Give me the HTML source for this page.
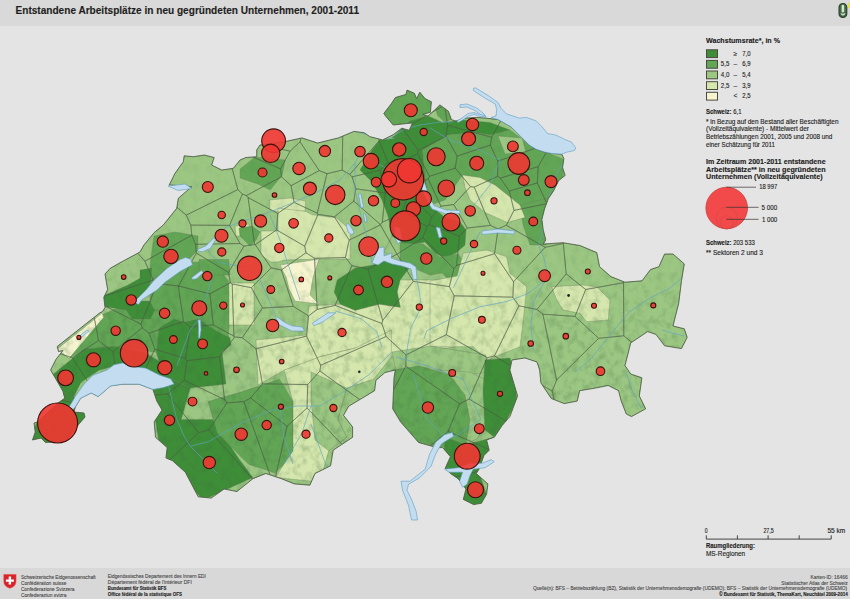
<!DOCTYPE html>
<html><head><meta charset="utf-8">
<style>
html,body{margin:0;padding:0;}
body{width:850px;height:599px;overflow:hidden;background:#e4e4e4;position:relative;font-family:"Liberation Sans",sans-serif;color:#222;}
.hdr{position:absolute;left:0;top:0;width:850px;height:26px;background:#d9d9d9;}
.title{position:absolute;left:15px;top:4px;font-weight:bold;font-size:10.1px;color:#222;white-space:nowrap;}
.ftr{position:absolute;left:0;top:568px;width:850px;height:31px;background:#d8d8d8;}
.t{position:absolute;white-space:nowrap;line-height:1;}
svg{position:absolute;left:0;top:0;}
</style></head><body>
<div class="hdr"></div>
<div class="ftr"></div>
<svg width="850" height="599" viewBox="0 0 850 599">
<defs><clipPath id="ch"><polygon points="184.2,155.8 193.3,156.7 204.2,155.0 214.2,157.5 211.7,165.0 221.7,170.0 233.3,168.3 240.0,160.0 245.8,157.5 256.7,156.7 256.7,150.0 260.0,145.0 284.0,141.8 302.0,137.9 317.6,143.0 338.3,137.9 353.9,131.4 364.2,132.7 370.0,136.7 382.7,139.9 393.3,134.6 401.8,128.2 409.2,130.3 412.5,122.9 393.3,125.0 385.9,116.5 383.8,113.4 391.2,103.9 395.4,97.5 406.0,94.4 407.0,90.1 414.4,93.3 416.6,98.6 419.8,92.2 425.0,98.6 431.4,101.8 430.4,112.3 422.9,114.4 428.0,116.0 435.6,109.1 439.9,104.9 448.4,111.2 451.5,119.7 456.0,121.0 465.6,118.1 477.0,117.4 485.4,118.1 498.1,119.5 510.8,126.6 520.7,136.5 529.2,144.9 536.2,149.2 544.7,152.0 551.8,153.4 561.7,154.1 563.9,158.6 562.6,167.6 565.2,175.4 558.7,180.6 553.5,190.9 548.3,198.7 544.5,209.0 541.9,219.4 543.2,229.7 545.8,240.0 543.2,244.1 562.9,242.7 579.9,245.5 596.8,252.6 599.6,266.7 610.9,276.6 625.0,282.2 642.0,280.8 650.5,269.5 658.9,266.7 664.6,254.0 673.0,254.0 684.3,263.9 681.5,280.8 678.7,303.4 673.0,326.0 684.3,328.8 687.2,337.3 681.5,348.6 664.6,345.8 656.1,334.5 647.6,331.6 639.2,337.3 630.7,342.9 627.9,354.2 625.0,365.5 630.7,374.0 641.9,377.8 639.3,395.9 645.7,408.8 631.5,416.6 626.3,414.0 621.2,401.1 618.6,390.7 608.2,385.5 595.3,388.1 579.7,390.7 577.2,401.1 564.2,403.6 551.3,398.5 540.9,382.9 539.6,370.0 537.0,362.0 525.0,358.0 512.0,360.0 509.9,370.0 517.6,395.9 509.9,416.6 502.1,425.6 494.3,437.3 486.6,439.9 489.2,450.2 484.0,455.4 478.8,469.6 476.2,473.5 487.9,483.9 486.6,494.2 481.4,503.3 473.6,504.6 463.3,499.4 465.9,489.0 458.1,478.7 450.4,473.5 445.2,468.3 450.4,456.7 442.6,447.6 436.7,447.6 418.6,442.5 400.5,421.8 392.7,408.8 394.0,377.8 395.3,370.0 384.9,372.6 375.9,380.4 374.6,390.7 361.6,398.5 348.7,406.2 343.5,415.3 352.6,426.9 352.6,437.3 333.2,450.2 330.6,465.8 315.0,473.5 309.9,485.2 294.3,483.9 281.4,478.7 265.9,473.5 252.9,478.7 240.0,489.0 237.0,491.6 224.1,489.0 211.2,498.1 198.2,496.8 185.3,472.2 172.3,460.6 165.9,458.0 167.2,447.6 155.5,437.3 154.2,421.8 162.0,410.1 156.8,401.1 152.9,389.4 138.8,384.1 122.9,384.1 110.6,385.9 98.2,396.5 91.2,392.9 80.6,398.2 75.3,407.1 74.0,412.0 84.0,413.0 85.0,417.0 79.0,424.0 66.2,441.2 45.5,442.5 41.0,438.0 32.5,440.0 35.2,432.1 34.0,423.0 37.8,421.8 58.0,403.0 64.7,398.2 62.9,391.2 50.6,370.0 55.9,359.4 62.9,350.6 58.5,351.6 57.2,346.5 99.9,312.8 102.5,311.5 105.0,307.6 103.8,297.3 107.6,289.5 105.0,274.0 110.2,268.3 123.2,261.0 140.0,252.0 143.9,245.0 154.2,232.6 163.3,225.0 176.7,208.3 178.3,198.3 191.7,186.7 169.2,185.0 175.0,173.3 183.3,161.7"/></clipPath>
<filter id="hs" x="0" y="0" width="850" height="599" filterUnits="userSpaceOnUse"><feTurbulence type="fractalNoise" baseFrequency="0.14 0.11" numOctaves="3" seed="7"/><feColorMatrix type="matrix" values="0 0 0 0 0.05  0 0 0 0 0.15  0 0 0 0 0.05  0.7 0 0 0 -0.3"/></filter>
<linearGradient id="alg" x1="0" y1="0" x2="0" y2="1"><stop offset="0" stop-color="#fff" stop-opacity="0.25"/><stop offset="0.38" stop-color="#fff" stop-opacity="0.35"/><stop offset="0.55" stop-color="#fff" stop-opacity="0.9"/><stop offset="1" stop-color="#fff" stop-opacity="1"/></linearGradient>
<mask id="alp" maskUnits="userSpaceOnUse" x="0" y="0" width="850" height="599"><rect x="0" y="80" width="850" height="440" fill="url(#alg)"/></mask></defs>
<polygon points="184.2,155.8 193.3,156.7 204.2,155.0 214.2,157.5 211.7,165.0 221.7,170.0 233.3,168.3 240.0,160.0 245.8,157.5 256.7,156.7 256.7,150.0 260.0,145.0 284.0,141.8 302.0,137.9 317.6,143.0 338.3,137.9 353.9,131.4 364.2,132.7 370.0,136.7 382.7,139.9 393.3,134.6 401.8,128.2 409.2,130.3 412.5,122.9 393.3,125.0 385.9,116.5 383.8,113.4 391.2,103.9 395.4,97.5 406.0,94.4 407.0,90.1 414.4,93.3 416.6,98.6 419.8,92.2 425.0,98.6 431.4,101.8 430.4,112.3 422.9,114.4 428.0,116.0 435.6,109.1 439.9,104.9 448.4,111.2 451.5,119.7 456.0,121.0 465.6,118.1 477.0,117.4 485.4,118.1 498.1,119.5 510.8,126.6 520.7,136.5 529.2,144.9 536.2,149.2 544.7,152.0 551.8,153.4 561.7,154.1 563.9,158.6 562.6,167.6 565.2,175.4 558.7,180.6 553.5,190.9 548.3,198.7 544.5,209.0 541.9,219.4 543.2,229.7 545.8,240.0 543.2,244.1 562.9,242.7 579.9,245.5 596.8,252.6 599.6,266.7 610.9,276.6 625.0,282.2 642.0,280.8 650.5,269.5 658.9,266.7 664.6,254.0 673.0,254.0 684.3,263.9 681.5,280.8 678.7,303.4 673.0,326.0 684.3,328.8 687.2,337.3 681.5,348.6 664.6,345.8 656.1,334.5 647.6,331.6 639.2,337.3 630.7,342.9 627.9,354.2 625.0,365.5 630.7,374.0 641.9,377.8 639.3,395.9 645.7,408.8 631.5,416.6 626.3,414.0 621.2,401.1 618.6,390.7 608.2,385.5 595.3,388.1 579.7,390.7 577.2,401.1 564.2,403.6 551.3,398.5 540.9,382.9 539.6,370.0 537.0,362.0 525.0,358.0 512.0,360.0 509.9,370.0 517.6,395.9 509.9,416.6 502.1,425.6 494.3,437.3 486.6,439.9 489.2,450.2 484.0,455.4 478.8,469.6 476.2,473.5 487.9,483.9 486.6,494.2 481.4,503.3 473.6,504.6 463.3,499.4 465.9,489.0 458.1,478.7 450.4,473.5 445.2,468.3 450.4,456.7 442.6,447.6 436.7,447.6 418.6,442.5 400.5,421.8 392.7,408.8 394.0,377.8 395.3,370.0 384.9,372.6 375.9,380.4 374.6,390.7 361.6,398.5 348.7,406.2 343.5,415.3 352.6,426.9 352.6,437.3 333.2,450.2 330.6,465.8 315.0,473.5 309.9,485.2 294.3,483.9 281.4,478.7 265.9,473.5 252.9,478.7 240.0,489.0 237.0,491.6 224.1,489.0 211.2,498.1 198.2,496.8 185.3,472.2 172.3,460.6 165.9,458.0 167.2,447.6 155.5,437.3 154.2,421.8 162.0,410.1 156.8,401.1 152.9,389.4 138.8,384.1 122.9,384.1 110.6,385.9 98.2,396.5 91.2,392.9 80.6,398.2 75.3,407.1 74.0,412.0 84.0,413.0 85.0,417.0 79.0,424.0 66.2,441.2 45.5,442.5 41.0,438.0 32.5,440.0 35.2,432.1 34.0,423.0 37.8,421.8 58.0,403.0 64.7,398.2 62.9,391.2 50.6,370.0 55.9,359.4 62.9,350.6 58.5,351.6 57.2,346.5 99.9,312.8 102.5,311.5 105.0,307.6 103.8,297.3 107.6,289.5 105.0,274.0 110.2,268.3 123.2,261.0 140.0,252.0 143.9,245.0 154.2,232.6 163.3,225.0 176.7,208.3 178.3,198.3 191.7,186.7 169.2,185.0 175.0,173.3 183.3,161.7" fill="#9cc783" stroke="none"/>
<g clip-path="url(#ch)">
<polygon points="154.0,236.0 175.0,232.0 198.0,236.0 198.0,250.0 190.0,258.0 182.0,262.0 165.0,272.0 150.0,282.0 150.0,265.0" fill="#62a655" stroke="#6b7a5e" stroke-width="0.5" stroke-opacity="0.7"/>
<polygon points="140.0,270.0 152.0,268.0 150.0,290.0 140.0,290.0" fill="#3e8e38" stroke="#6b7a5e" stroke-width="0.5" stroke-opacity="0.7"/>
<polygon points="99.1,316.1 120.1,307.1 156.2,310.1 168.2,310.1 177.2,319.1 159.2,328.1 156.2,352.2 114.1,346.2 84.1,349.2 69.0,358.2 57.0,349.2" fill="#62a655" stroke="#6b7a5e" stroke-width="0.5" stroke-opacity="0.7"/>
<polygon points="100.0,300.0 105.1,295.1 129.1,284.6 147.2,274.1 150.2,289.1 138.1,301.1 150.2,301.1 154.7,310.1 150.2,319.1 132.1,319.1 126.1,310.1 106.6,307.1" fill="#3e8e38" stroke="#6b7a5e" stroke-width="0.5" stroke-opacity="0.7"/>
<polygon points="57.0,349.2 102.1,313.1 103.6,317.6 69.1,358.2" fill="#f6f5cf" stroke="#6b7a5e" stroke-width="0.5" stroke-opacity="0.7"/>
<polygon points="51.0,376.2 69.0,361.2 84.1,349.2 114.1,346.2 144.1,352.2 159.2,361.2 174.2,373.2 171.2,382.2 147.2,373.2 120.1,364.2 99.1,370.2 81.1,382.2 72.0,400.0 48.0,394.2" fill="#3e8e38" stroke="#6b7a5e" stroke-width="0.5" stroke-opacity="0.7"/>
<polygon points="28.0,447.0 92.0,447.0 92.0,405.0 62.0,392.0 45.0,398.0" fill="#3e8e38" stroke="#6b7a5e" stroke-width="0.5" stroke-opacity="0.7"/>
<polygon points="159.2,328.1 174.2,319.1 183.2,322.1 198.2,319.1 218.0,323.0 222.0,330.0 230.0,338.0 231.0,345.0 222.0,352.0 226.0,384.0 190.2,388.1 172.4,379.2 159.2,361.2 156.2,352.2" fill="#3e8e38" stroke="#6b7a5e" stroke-width="0.5" stroke-opacity="0.7"/>
<polygon points="150.0,282.0 165.0,270.0 190.0,262.0 212.0,262.0 228.0,280.0 232.0,300.0 228.0,337.0 216.2,331.1 198.2,319.1 183.2,322.1 174.2,319.1 168.2,310.1 154.7,310.1 150.2,301.1" fill="#62a655" stroke="#6b7a5e" stroke-width="0.5" stroke-opacity="0.7"/>
<polygon points="240.1,169.0 255.1,157.0 285.2,160.0 282.2,175.1 270.2,190.1 258.1,184.1 240.1,178.1" fill="#62a655" stroke="#6b7a5e" stroke-width="0.5" stroke-opacity="0.7"/>
<polygon points="269.5,200.0 290.0,198.0 305.7,201.0 305.0,211.0 280.0,212.0 270.0,210.0" fill="#d6e7ae" stroke="#6b7a5e" stroke-width="0.5" stroke-opacity="0.7"/>
<polygon points="235.0,226.0 249.0,224.0 249.0,236.0 236.0,236.0" fill="#d6e7ae" stroke="#6b7a5e" stroke-width="0.5" stroke-opacity="0.7"/>
<polygon points="239.0,228.0 252.0,226.0 260.0,232.0 256.0,240.0 250.0,246.0 244.0,240.0 240.0,236.0" fill="#62a655" stroke="#6b7a5e" stroke-width="0.5" stroke-opacity="0.7"/>
<polygon points="199.0,259.5 228.7,259.5 230.0,275.0 199.0,275.0" fill="#62a655" stroke="#6b7a5e" stroke-width="0.5" stroke-opacity="0.7"/>
<polygon points="278.0,208.0 305.7,211.4 312.3,214.7 337.0,218.0 350.2,230.0 350.2,259.1 322.0,259.0 284.0,260.0 278.0,262.0 271.0,262.0 261.0,255.0 261.0,231.0 278.0,231.0" fill="#d6e7ae" stroke="#6b7a5e" stroke-width="0.5" stroke-opacity="0.7"/>
<polygon points="229.0,283.0 254.0,283.0 254.0,325.0 229.0,325.0" fill="#d6e7ae" stroke="#6b7a5e" stroke-width="0.5" stroke-opacity="0.7"/>
<polygon points="309.0,306.0 340.2,304.1 355.2,310.2 379.2,304.1 400.2,307.2 394.0,280.0 460.0,280.0 460.0,346.0 391.4,356.8 355.6,347.9 319.9,356.8 309.0,362.0 284.1,370.2 258.0,385.0 256.0,340.0 306.0,335.0" fill="#d6e7ae" stroke="#6b7a5e" stroke-width="0.5" stroke-opacity="0.7"/>
<polygon points="280.1,265.1 319.1,259.1 313.1,277.1 310.1,295.1 319.1,304.1 295.1,301.1 289.1,289.1 286.1,277.1" fill="#f6f5cf" stroke="#6b7a5e" stroke-width="0.5" stroke-opacity="0.7"/>
<polygon points="337.2,280.1 355.2,268.1 373.2,265.1 382.2,259.1 400.2,263.6 409.2,268.1 400.2,280.1 397.2,292.1 400.2,307.2 379.2,304.1 355.2,310.2 340.2,304.1 334.1,292.1" fill="#3e8e38" stroke="#6b7a5e" stroke-width="0.5" stroke-opacity="0.7"/>
<polygon points="383.0,113.0 391.0,103.0 395.0,97.0 407.0,90.0 420.0,92.0 432.0,101.0 431.0,113.0 414.0,121.0 393.0,126.0 385.0,117.0" fill="#62a655" stroke="#6b7a5e" stroke-width="0.5" stroke-opacity="0.7"/>
<polygon points="435.6,109.1 439.9,104.9 448.4,111.2 451.5,119.7 444.1,121.8 437.8,115.5" fill="#62a655" stroke="#6b7a5e" stroke-width="0.5" stroke-opacity="0.7"/>
<polygon points="410.0,121.0 428.0,116.0 442.5,122.5 462.5,120.0 490.0,122.5 510.0,130.0 490.0,135.0 475.0,132.5 447.5,135.0 412.5,140.0 392.5,137.5" fill="#3e8e38" stroke="#6b7a5e" stroke-width="0.5" stroke-opacity="0.7"/>
<polygon points="380.0,140.0 405.0,137.5 422.5,150.0 425.0,175.0 430.0,205.0 445.0,217.5 460.0,222.0 466.0,230.0 465.0,245.0 456.0,253.0 445.0,258.0 435.0,253.0 425.0,242.0 406.0,246.0 396.0,244.0 392.0,236.0 388.0,216.0 382.0,200.0 372.0,182.0 360.0,170.0 372.0,150.0" fill="#3e8e38" stroke="#6b7a5e" stroke-width="0.5" stroke-opacity="0.7"/>
<polygon points="392.0,236.0 406.0,246.0 424.0,248.0 420.0,260.0 400.0,260.0 384.0,252.0" fill="#9cc783" stroke="#6b7a5e" stroke-width="0.5" stroke-opacity="0.7"/>
<polygon points="400.0,243.0 423.0,244.0 440.0,257.0 458.0,254.0 467.0,267.0 465.0,273.0 450.0,281.0 442.0,273.0 430.0,275.0 418.0,270.0 410.0,265.0 400.0,260.0" fill="#62a655" stroke="#6b7a5e" stroke-width="0.5" stroke-opacity="0.7"/>
<polygon points="392.0,137.0 447.5,135.0 440.0,142.0 422.5,150.0 405.0,145.0" fill="#3e8e38" stroke="#6b7a5e" stroke-width="0.5" stroke-opacity="0.7"/>
<polygon points="422.5,150.0 447.5,135.0 475.0,132.5 490.0,135.0 510.0,130.0 530.0,145.0 565.0,160.0 560.0,205.0 545.0,230.0 525.0,217.5 520.0,205.0 495.0,185.0 462.5,175.0 445.0,200.0 430.0,205.0 425.0,175.0" fill="#62a655" stroke="#6b7a5e" stroke-width="0.5" stroke-opacity="0.7"/>
<polygon points="498.0,136.0 522.0,138.0 526.0,152.0 505.0,154.0" fill="#9cc783" stroke="#6b7a5e" stroke-width="0.5" stroke-opacity="0.7"/>
<polygon points="520.0,205.0 548.0,198.0 544.0,220.0 546.0,245.0 530.0,245.0 523.0,225.0" fill="#62a655" stroke="#6b7a5e" stroke-width="0.5" stroke-opacity="0.7"/>
<polygon points="462.5,175.0 480.0,177.5 495.0,185.0 520.0,205.0 525.0,217.5 507.5,222.5 485.0,212.5 470.0,200.0 465.0,187.5" fill="#d6e7ae" stroke="#6b7a5e" stroke-width="0.5" stroke-opacity="0.7"/>
<polygon points="430.0,281.0 457.0,276.0 463.3,253.3 486.7,250.0 506.7,256.7 510.0,273.3 526.7,286.7 523.3,320.0 520.0,346.7 486.7,360.0 473.3,346.7 430.0,346.7" fill="#d6e7ae" stroke="#6b7a5e" stroke-width="0.5" stroke-opacity="0.7"/>
<polygon points="551.7,286.7 583.3,285.0 596.7,286.7 610.0,300.0 608.3,320.0 586.7,321.7 580.0,313.3 563.3,310.0 556.7,300.0" fill="#d6e7ae" stroke="#6b7a5e" stroke-width="0.5" stroke-opacity="0.7"/>
<polygon points="150.0,388.1 172.4,379.2 190.2,388.1 181.3,419.4 212.6,419.4 239.4,459.6 252.8,477.5 203.6,499.9 172.4,468.6 158.9,441.8" fill="#3e8e38" stroke="#6b7a5e" stroke-width="0.5" stroke-opacity="0.7"/>
<polygon points="208.1,401.5 239.4,392.6 279.6,379.2 293.0,401.5 293.0,455.2 275.2,473.1 248.3,464.1 217.1,432.8" fill="#62a655" stroke="#6b7a5e" stroke-width="0.5" stroke-opacity="0.7"/>
<polygon points="284.1,370.2 319.9,356.8 355.6,347.9 391.4,330.0 391.4,356.8 373.5,379.2 346.7,388.1 337.8,419.4 346.7,437.3 328.8,450.7 319.9,482.0 275.2,477.5 293.0,450.7 293.0,401.5" fill="#d6e7ae" stroke="#6b7a5e" stroke-width="0.5" stroke-opacity="0.7"/>
<polygon points="311.0,372.0 346.7,388.1 337.8,419.4 346.7,437.3 328.8,450.7 315.0,440.0 311.0,400.0" fill="#9cc783" stroke="#6b7a5e" stroke-width="0.5" stroke-opacity="0.7"/>
<polygon points="392.0,352.0 430.0,346.0 486.0,355.0 486.0,372.0 470.0,375.0 440.0,370.0 410.0,370.0 396.0,372.0" fill="#9cc783" stroke="#6b7a5e" stroke-width="0.5" stroke-opacity="0.7"/>
<polygon points="392.0,370.0 420.0,366.0 450.0,375.0 465.0,395.0 470.0,420.0 466.0,445.0 440.0,447.0 418.6,442.5 400.5,421.8 392.7,408.8" fill="#62a655" stroke="#6b7a5e" stroke-width="0.5" stroke-opacity="0.7"/>
<polygon points="440.0,370.0 470.0,372.0 486.0,380.0 486.0,420.0 478.0,438.0 466.0,445.0 470.0,420.0 465.0,395.0 450.0,375.0" fill="#9cc783" stroke="#6b7a5e" stroke-width="0.5" stroke-opacity="0.7"/>
<polygon points="485.0,360.0 510.0,358.0 515.0,376.7 516.7,400.0 506.7,420.0 494.0,437.0 485.0,430.0 483.0,390.0" fill="#3e8e38" stroke="#6b7a5e" stroke-width="0.5" stroke-opacity="0.7"/>
<polygon points="445.0,437.0 466.0,445.0 494.0,437.0 490.0,460.0 480.0,475.0 490.0,505.0 440.0,505.0" fill="#3e8e38" stroke="#6b7a5e" stroke-width="0.5" stroke-opacity="0.7"/>
<rect x="0" y="0" width="850" height="599" fill="#000" filter="url(#hs)" mask="url(#alp)"/>
<path d="M61.6 400.4 L58.0 403.0 L37.8 421.8 L34.0 423.0 L35.2 432.1 L32.5 440.0 L41.0 438.0 L45.5 442.5 L66.2 441.2 L79.0 424.0 L85.0 417.0 L84.0 413.0 L74.0 412.0 L75.3 407.1 L77.6 403.3 L61.6 400.4Z M113.0 351.7 L98.5 340.6 L72.3 357.7 L97.1 396.0 L98.2 396.5 L110.6 385.9 L118.4 384.8 L113.0 351.7Z M118.4 384.8 L122.9 384.1 L138.3 384.1 L154.8 349.2 L149.1 333.1 L142.2 327.8 L113.0 351.7 L118.4 384.8Z M77.6 403.3 L80.6 398.2 L91.2 392.9 L97.1 396.0 L72.3 357.7 L60.4 353.8 L55.9 359.4 L50.6 370.0 L62.9 391.2 L64.7 398.2 L61.6 400.4 L77.6 403.3Z M72.3 357.7 L98.5 340.6 L94.2 317.3 L57.2 346.5 L58.5 351.6 L62.9 350.6 L60.4 353.8 L72.3 357.7Z M153.2 280.0 L144.9 261.2 L137.7 253.2 L123.2 261.0 L110.2 268.3 L105.0 274.0 L107.6 289.5 L104.4 296.1 L153.2 280.0Z M198.6 432.7 L167.3 393.9 L154.8 395.1 L156.8 401.1 L162.0 410.1 L154.2 421.8 L155.5 437.3 L167.2 447.6 L165.9 458.0 L170.0 459.6 L198.6 432.7Z M142.2 327.8 L140.9 324.1 L104.8 305.9 L105.0 307.6 L102.5 311.5 L99.9 312.8 L94.2 317.3 L98.5 340.6 L113.0 351.7 L142.2 327.8Z M186.3 215.1 L237.8 189.6 L232.2 168.5 L221.7 170.0 L211.7 165.0 L214.2 157.5 L204.2 155.0 L193.3 156.7 L184.2 155.8 L183.3 161.7 L175.0 173.3 L169.2 185.0 L191.7 186.7 L178.3 198.3 L176.9 207.3 L186.3 215.1Z M157.1 283.6 L153.2 280.0 L104.4 296.1 L103.8 297.3 L104.8 305.9 L140.9 324.1 L157.1 283.6Z M140.9 324.1 L142.2 327.8 L149.1 333.1 L183.5 321.5 L178.3 286.0 L157.1 283.6 L140.9 324.1Z M149.1 333.1 L154.8 349.2 L185.5 358.6 L190.2 327.0 L183.5 321.5 L149.1 333.1Z M191.8 235.2 L144.9 261.2 L153.2 280.0 L157.1 283.6 L178.3 286.0 L178.5 286.0 L196.3 253.1 L195.5 244.3 L191.8 235.2Z M195.5 244.3 L240.1 243.5 L229.6 225.4 L190.8 225.1 L191.8 235.2 L195.5 244.3Z M144.9 261.2 L191.8 235.2 L190.8 225.1 L186.3 215.1 L176.9 207.3 L176.7 208.3 L163.3 225.0 L154.2 232.6 L143.9 245.0 L140.0 252.0 L137.7 253.2 L144.9 261.2Z M138.3 384.1 L138.8 384.1 L152.9 389.4 L154.8 395.1 L167.3 393.9 L184.1 380.2 L186.8 360.7 L185.5 358.6 L154.8 349.2 L138.3 384.1Z M208.8 429.9 L198.6 432.7 L170.0 459.6 L172.3 460.6 L185.3 472.2 L198.2 496.8 L211.2 498.1 L224.1 489.0 L237.0 491.6 L240.0 489.0 L252.5 479.0 L208.8 429.9Z M186.8 360.7 L219.5 356.9 L234.7 337.0 L233.9 336.1 L213.3 324.9 L190.2 327.0 L185.5 358.6 L186.8 360.7Z M190.2 327.0 L213.3 324.9 L209.9 293.8 L178.5 286.0 L178.3 286.0 L183.5 321.5 L190.2 327.0Z M167.3 393.9 L198.6 432.7 L208.8 429.9 L226.9 402.9 L224.6 399.6 L184.1 380.2 L167.3 393.9Z M196.3 253.1 L178.5 286.0 L209.9 293.8 L230.4 282.7 L228.5 272.4 L196.3 253.1Z M228.5 272.4 L243.9 246.2 L240.1 243.5 L195.5 244.3 L196.3 253.1 L228.5 272.4Z M213.3 324.9 L233.9 336.1 L232.2 284.0 L230.4 282.7 L209.9 293.8 L213.3 324.9Z M184.1 380.2 L224.6 399.6 L219.5 356.9 L186.8 360.7 L184.1 380.2Z M280.6 168.9 L290.0 151.2 L262.1 144.7 L260.0 145.0 L256.7 150.0 L256.7 156.7 L252.8 157.0 L280.6 168.9Z M226.9 402.9 L243.9 401.6 L250.6 398.0 L262.4 383.8 L256.0 348.8 L242.3 337.7 L234.7 337.0 L219.5 356.9 L224.6 399.6 L226.9 402.9Z M226.9 402.9 L208.8 429.9 L252.5 479.0 L252.9 478.7 L265.9 473.5 L270.1 474.9 L243.9 401.6 L226.9 402.9Z M243.9 246.2 L254.6 244.5 L248.1 197.6 L246.3 195.6 L242.4 194.0 L229.6 225.4 L240.1 243.5 L243.9 246.2Z M190.8 225.1 L229.6 225.4 L242.4 194.0 L237.8 189.6 L186.3 215.1 L190.8 225.1Z M242.4 194.0 L246.3 195.6 L281.5 176.8 L280.6 168.9 L252.8 157.0 L245.8 157.5 L240.0 160.0 L233.3 168.3 L232.2 168.5 L237.8 189.6 L242.4 194.0Z M230.4 282.7 L232.2 284.0 L251.4 287.7 L271.2 267.9 L255.2 244.7 L254.6 244.5 L243.9 246.2 L228.5 272.4 L230.4 282.7Z M242.3 337.7 L262.5 308.0 L251.4 287.7 L232.2 284.0 L233.9 336.1 L234.7 337.0 L242.3 337.7Z M307.1 408.0 L287.1 426.2 L275.5 476.7 L281.4 478.7 L294.3 483.9 L309.9 485.2 L315.0 473.5 L330.6 465.8 L333.2 450.2 L342.0 444.4 L307.1 408.0Z M251.4 287.7 L262.5 308.0 L293.3 306.4 L281.3 270.0 L271.2 267.9 L251.4 287.7Z M242.3 337.7 L256.0 348.8 L306.6 336.1 L308.6 315.9 L293.3 306.4 L262.5 308.0 L242.3 337.7Z M243.9 401.6 L270.1 474.9 L275.5 476.7 L287.1 426.2 L250.6 398.0 L243.9 401.6Z M246.3 195.6 L248.1 197.6 L277.7 213.4 L294.1 202.4 L291.1 185.7 L281.5 176.8 L246.3 195.6Z M255.2 244.7 L276.6 229.9 L277.7 213.4 L248.1 197.6 L254.6 244.5 L255.2 244.7Z M271.2 267.9 L281.3 270.0 L306.0 252.7 L304.7 246.2 L276.6 229.9 L255.2 244.7 L271.2 267.9Z M290.0 151.2 L300.1 141.9 L300.8 138.2 L284.0 141.8 L262.1 144.7 L290.0 151.2Z M281.5 176.8 L291.1 185.7 L319.2 170.6 L300.1 141.9 L290.0 151.2 L280.6 168.9 L281.5 176.8Z M262.4 383.8 L307.7 384.6 L319.9 371.0 L320.7 365.3 L306.6 336.1 L256.0 348.8 L262.4 383.8Z M250.6 398.0 L287.1 426.2 L307.1 408.0 L307.7 384.6 L262.4 383.8 L250.6 398.0Z M403.3 129.4 L404.1 128.9 L401.8 128.2 L401.1 128.7 L403.3 129.4Z M426.6 115.6 L422.9 114.4 L430.4 112.3 L431.4 101.8 L425.0 98.6 L419.8 92.2 L416.6 98.6 L414.4 93.3 L407.0 90.1 L406.0 94.4 L395.4 97.5 L391.2 103.9 L383.8 113.4 L385.9 116.5 L393.3 125.0 L412.5 122.9 L411.9 124.3 L426.6 115.6Z M442.0 106.5 L439.9 104.9 L435.6 109.1 L432.0 112.4 L442.0 106.5Z M277.7 213.4 L276.6 229.9 L304.7 246.2 L318.0 214.3 L317.3 213.2 L294.1 202.4 L277.7 213.4Z M308.6 315.9 L317.2 309.4 L314.5 258.3 L306.0 252.7 L281.3 270.0 L293.3 306.4 L308.6 315.9Z M306.6 336.1 L320.7 365.3 L386.1 336.5 L381.9 323.5 L335.1 305.4 L317.2 309.4 L308.6 315.9 L306.6 336.1Z M306.0 252.7 L314.5 258.3 L345.4 257.5 L349.2 240.0 L334.4 216.8 L318.0 214.3 L304.7 246.2 L306.0 252.7Z M300.1 141.9 L319.2 170.6 L327.0 173.7 L342.2 170.1 L342.7 136.1 L338.3 137.9 L317.6 143.0 L302.0 137.9 L300.8 138.2 L300.1 141.9Z M294.1 202.4 L317.3 213.2 L327.0 173.7 L319.2 170.6 L291.1 185.7 L294.1 202.4Z M307.1 408.0 L342.0 444.4 L352.6 437.3 L352.6 426.9 L343.5 415.3 L348.7 406.2 L359.8 399.6 L319.9 371.0 L307.7 384.6 L307.1 408.0Z M477.6 471.5 L478.8 469.6 L484.0 455.4 L489.2 450.2 L489.0 449.4 L448.1 431.4 L430.3 445.8 L436.7 447.6 L442.6 447.6 L450.4 456.7 L445.2 468.3 L450.4 473.5 L455.5 476.9 L477.6 471.5Z M318.0 214.3 L334.4 216.8 L353.8 201.1 L355.8 188.8 L352.1 176.9 L349.8 174.4 L342.2 170.1 L327.0 173.7 L317.3 213.2 L318.0 214.3Z M349.2 240.0 L380.4 224.9 L380.4 224.5 L353.8 201.1 L334.4 216.8 L349.2 240.0Z M317.2 309.4 L335.1 305.4 L351.9 265.6 L345.4 257.5 L314.5 258.3 L317.2 309.4Z M448.1 431.4 L459.5 403.8 L405.8 366.2 L393.5 389.9 L392.7 408.8 L400.5 421.8 L418.6 442.5 L430.3 445.8 L448.1 431.4Z M405.8 366.2 L406.0 354.9 L386.1 336.5 L320.7 365.3 L319.9 371.0 L359.8 399.6 L361.6 398.5 L374.6 390.7 L375.9 380.4 L384.9 372.6 L395.3 370.0 L394.0 377.8 L393.5 389.9 L405.8 366.2Z M349.8 174.4 L379.1 140.8 L379.0 139.0 L370.0 136.7 L364.2 132.7 L353.9 131.4 L342.7 136.1 L342.2 170.1 L349.8 174.4Z M381.9 323.5 L382.7 320.5 L368.0 269.3 L351.9 265.6 L335.1 305.4 L381.9 323.5Z M351.9 265.6 L368.0 269.3 L397.0 254.2 L380.4 224.9 L349.2 240.0 L345.4 257.5 L351.9 265.6Z M381.9 323.5 L386.1 336.5 L406.0 354.9 L446.3 334.7 L454.2 295.8 L449.3 286.6 L413.3 281.4 L382.7 320.5 L381.9 323.5Z M352.1 176.9 L380.1 170.1 L388.0 162.3 L379.1 140.8 L349.8 174.4 L352.1 176.9Z M382.3 222.2 L401.8 213.8 L408.2 194.1 L395.9 190.1 L385.3 193.0 L382.3 222.2Z M385.3 193.0 L385.1 192.9 L355.8 188.8 L353.8 201.1 L380.4 224.5 L382.3 222.2 L385.3 193.0Z M382.7 320.5 L413.3 281.4 L397.2 254.2 L397.0 254.2 L368.0 269.3 L382.7 320.5Z M379.1 140.8 L388.0 162.3 L394.9 164.7 L417.6 153.7 L418.3 150.3 L403.3 129.4 L401.1 128.7 L393.3 134.6 L382.7 139.9 L379.0 139.0 L379.1 140.8Z M380.4 224.9 L397.0 254.2 L397.2 254.2 L422.8 237.6 L427.2 226.3 L401.8 213.8 L382.3 222.2 L380.4 224.5 L380.4 224.9Z M355.8 188.8 L385.1 192.9 L380.1 170.1 L352.1 176.9 L355.8 188.8Z M380.1 170.1 L385.1 192.9 L385.3 193.0 L395.9 190.1 L395.9 167.2 L394.9 164.7 L388.0 162.3 L380.1 170.1Z M413.3 281.4 L449.3 286.6 L453.9 268.7 L422.8 237.6 L397.2 254.2 L413.3 281.4Z M395.9 190.1 L408.2 194.1 L408.7 194.0 L418.1 183.9 L395.9 167.2 L395.9 190.1Z M418.3 150.3 L446.0 136.3 L447.6 125.3 L445.1 108.7 L442.0 106.5 L432.0 112.4 L428.0 116.0 L426.6 115.6 L411.9 124.3 L409.2 130.3 L404.1 128.9 L403.3 129.4 L418.3 150.3Z M408.2 194.1 L401.8 213.8 L427.2 226.3 L429.1 224.6 L431.7 217.0 L408.7 194.0 L408.2 194.1Z M395.9 167.2 L418.1 183.9 L428.2 178.8 L429.4 176.3 L417.6 153.7 L394.9 164.7 L395.9 167.2Z M417.6 153.7 L429.4 176.3 L455.2 168.1 L457.1 156.1 L446.0 136.3 L418.3 150.3 L417.6 153.7Z M418.1 183.9 L408.7 194.0 L431.7 217.0 L440.9 206.2 L428.2 178.8 L418.1 183.9Z M456.6 265.4 L459.5 236.2 L429.1 224.6 L427.2 226.3 L422.8 237.6 L453.9 268.7 L456.6 265.4Z M453.9 268.7 L449.3 286.6 L454.2 295.8 L512.9 297.2 L513.5 281.8 L494.5 253.7 L456.6 265.4 L453.9 268.7Z M447.6 125.3 L491.7 137.3 L500.6 120.9 L498.1 119.5 L485.4 118.1 L477.0 117.4 L465.6 118.1 L456.0 121.0 L451.5 119.7 L448.4 111.2 L445.1 108.7 L447.6 125.3Z M428.2 178.8 L440.9 206.2 L453.7 204.5 L470.5 186.6 L455.2 168.1 L429.4 176.3 L428.2 178.8Z M455.5 476.9 L458.1 478.7 L465.9 489.0 L463.3 499.4 L473.6 504.6 L481.4 503.3 L486.6 494.2 L487.9 483.9 L476.2 473.5 L477.6 471.5 L455.5 476.9Z M405.8 366.2 L459.5 403.8 L469.2 399.1 L487.3 357.7 L446.3 334.7 L406.0 354.9 L405.8 366.2Z M446.0 136.3 L457.1 156.1 L490.3 145.1 L491.7 137.3 L447.6 125.3 L446.0 136.3Z M429.1 224.6 L459.5 236.2 L467.3 228.0 L453.7 204.5 L440.9 206.2 L431.7 217.0 L429.1 224.6Z M453.7 204.5 L467.3 228.0 L490.4 225.4 L474.2 187.1 L470.5 186.6 L453.7 204.5Z M456.6 265.4 L494.5 253.7 L498.1 229.0 L490.4 225.4 L467.3 228.0 L459.5 236.2 L456.6 265.4Z M448.1 431.4 L489.0 449.4 L486.6 439.9 L494.3 437.3 L502.1 425.6 L506.1 421.0 L469.2 399.1 L459.5 403.8 L448.1 431.4Z M457.1 156.1 L455.2 168.1 L470.5 186.6 L474.2 187.1 L497.7 176.3 L497.8 161.2 L490.3 145.1 L457.1 156.1Z M446.3 334.7 L487.3 357.7 L494.5 355.9 L518.9 305.8 L512.9 297.2 L454.2 295.8 L446.3 334.7Z M552.2 391.1 L542.4 385.2 L551.3 398.5 L554.1 399.6 L552.2 391.1Z M494.5 355.9 L487.3 357.7 L469.2 399.1 L506.1 421.0 L509.9 416.6 L517.6 395.9 L509.9 370.0 L510.8 365.9 L494.5 355.9Z M623.8 335.8 L598.7 338.3 L556.6 380.0 L552.2 391.1 L554.1 399.6 L564.2 403.6 L577.2 401.1 L579.7 390.7 L595.3 388.1 L608.2 385.5 L618.6 390.7 L621.2 401.1 L626.3 414.0 L631.5 416.6 L645.7 408.8 L639.3 395.9 L641.9 377.8 L630.7 374.0 L625.0 365.5 L627.9 354.2 L630.7 342.9 L631.8 342.2 L623.8 335.8Z M491.7 137.3 L490.3 145.1 L497.8 161.2 L534.9 148.4 L529.2 144.9 L520.7 136.5 L510.8 126.6 L500.6 120.9 L491.7 137.3Z M490.4 225.4 L498.1 229.0 L506.3 225.2 L514.0 210.4 L509.3 191.0 L500.3 178.1 L497.7 176.3 L474.2 187.1 L490.4 225.4Z M518.9 305.8 L536.9 309.5 L566.2 273.9 L563.3 243.5 L545.1 247.3 L513.5 281.8 L512.9 297.2 L518.9 305.8Z M498.1 229.0 L494.5 253.7 L513.5 281.8 L545.1 247.3 L506.3 225.2 L498.1 229.0Z M556.6 380.0 L542.9 314.2 L536.9 309.5 L518.9 305.8 L494.5 355.9 L510.8 365.9 L512.0 360.0 L525.0 358.0 L537.0 362.0 L539.6 370.0 L540.9 382.9 L542.4 385.2 L552.2 391.1 L556.6 380.0Z M497.7 176.3 L500.3 178.1 L538.2 166.6 L546.3 152.3 L544.7 152.0 L536.2 149.2 L534.9 148.4 L497.8 161.2 L497.7 176.3Z M538.2 166.6 L537.3 183.0 L546.7 203.1 L548.3 198.7 L553.5 190.9 L558.7 180.6 L565.2 175.4 L562.6 167.6 L563.9 158.6 L561.7 154.1 L551.8 153.4 L546.3 152.3 L538.2 166.6Z M509.3 191.0 L537.3 183.0 L538.2 166.6 L500.3 178.1 L509.3 191.0Z M514.0 210.4 L546.4 203.8 L546.7 203.1 L537.3 183.0 L509.3 191.0 L514.0 210.4Z M506.3 225.2 L545.1 247.3 L563.3 243.5 L563.9 242.9 L562.9 242.7 L543.2 244.1 L545.8 240.0 L543.2 229.7 L541.9 219.4 L544.5 209.0 L546.4 203.8 L514.0 210.4 L506.3 225.2Z M542.9 314.2 L575.0 316.4 L585.7 289.5 L566.2 273.9 L536.9 309.5 L542.9 314.2Z M566.2 273.9 L585.7 289.5 L623.5 282.7 L624.0 281.8 L610.9 276.6 L599.6 266.7 L596.8 252.6 L579.9 245.5 L563.9 242.9 L563.3 243.5 L566.2 273.9Z M598.7 338.3 L575.0 316.4 L542.9 314.2 L556.6 380.0 L598.7 338.3Z M575.0 316.4 L598.7 338.3 L623.8 335.8 L623.5 282.7 L585.7 289.5 L575.0 316.4Z M623.5 282.7 L623.8 335.8 L631.8 342.2 L639.2 337.3 L647.6 331.6 L656.1 334.5 L664.6 345.8 L681.5 348.6 L687.2 337.3 L684.3 328.8 L673.0 326.0 L678.7 303.4 L681.5 280.8 L684.3 263.9 L673.0 254.0 L664.6 254.0 L658.9 266.7 L650.5 269.5 L642.0 280.8 L625.0 282.2 L624.0 281.8 L623.5 282.7Z" fill="none" stroke="#4f5f48" stroke-width="0.6" stroke-opacity="0.75"/>
<polyline points="167.9,383.6 172.0,400.0 176.8,419.4 184.0,436.0 190.2,446.2 208.1,441.8 239.4,423.9 270.7,410.5 297.5,406.0 319.9,406.0 342.2,392.6 369.0,374.7 391.4,352.4" fill="none" stroke="#5fa3c6" stroke-width="0.8" stroke-opacity="0.8"/>
<polyline points="311.0,406.0 302.0,432.8 284.0,464.0" fill="none" stroke="#5fa3c6" stroke-width="0.8" stroke-opacity="0.8"/>
<polyline points="311.0,424.0 328.8,473.0" fill="none" stroke="#5fa3c6" stroke-width="0.8" stroke-opacity="0.8"/>
<polyline points="279.6,406.0 284.0,437.0 293.0,464.0" fill="none" stroke="#5fa3c6" stroke-width="0.8" stroke-opacity="0.8"/>
<polyline points="190.2,446.2 217.0,473.0" fill="none" stroke="#5fa3c6" stroke-width="0.8" stroke-opacity="0.8"/>
<polyline points="395.9,356.8 427.0,365.8 463.0,379.2 480.8,419.4 454.0,437.3" fill="none" stroke="#5fa3c6" stroke-width="0.8" stroke-opacity="0.8"/>
<polyline points="413.7,374.7 427.0,419.4 445.0,437.3" fill="none" stroke="#5fa3c6" stroke-width="0.8" stroke-opacity="0.8"/>
<polyline points="335.4,311.0 361.3,318.8 376.8,331.8 382.0,347.3" fill="none" stroke="#5fa3c6" stroke-width="0.8" stroke-opacity="0.8"/>
<polyline points="275.3,314.7 268.9,299.9 260.5,280.8 249.9,268.1 239.3,266.0 226.6,263.9 218.1,261.8 211.8,255.4 205.4,247.0" fill="none" stroke="#5fa3c6" stroke-width="0.8" stroke-opacity="0.8"/>
<polyline points="214.0,238.0 225.0,228.0 240.0,222.0 262.0,215.0 290.0,204.0 315.0,193.0 340.0,180.0 355.0,163.0 362.0,150.0" fill="none" stroke="#5fa3c6" stroke-width="0.8" stroke-opacity="0.8"/>
<polyline points="260.0,145.0 284.0,141.0 302.0,137.0 318.0,142.0 338.0,137.0 354.0,131.0 375.0,137.0 389.0,139.0 405.0,129.0 420.0,125.0 440.0,122.0 452.0,122.0" fill="none" stroke="#5fa3c6" stroke-width="0.8" stroke-opacity="0.8"/>
<polyline points="424.0,338.9 426.7,330.8 453.4,317.5 480.1,306.8 506.8,301.5 528.2,293.5 545.5,280.0 548.0,274.8 544.0,258.7 538.8,245.4 545.0,220.0 548.0,200.0 556.0,175.0 565.0,160.0 570.0,150.0" fill="none" stroke="#5fa3c6" stroke-width="0.8" stroke-opacity="0.8"/>
<polyline points="545.5,280.0 533.5,301.5 530.8,325.5 533.5,349.5" fill="none" stroke="#5fa3c6" stroke-width="0.8" stroke-opacity="0.8"/>
<polyline points="480.0,232.0 469.4,253.4 453.4,288.0" fill="none" stroke="#5fa3c6" stroke-width="0.8" stroke-opacity="0.8"/>
<polyline points="413.4,264.0 418.7,288.0 421.4,306.8 410.7,328.2 405.3,360.0" fill="none" stroke="#5fa3c6" stroke-width="0.8" stroke-opacity="0.8"/>
<polyline points="372.0,263.0 368.0,240.0 362.0,220.0 355.0,190.0 355.0,163.0" fill="none" stroke="#5fa3c6" stroke-width="0.8" stroke-opacity="0.8"/>
<polyline points="422.0,183.0 400.0,175.0 380.0,165.0 360.0,156.0" fill="none" stroke="#5fa3c6" stroke-width="0.8" stroke-opacity="0.8"/>
<polyline points="575.0,372.0 590.0,360.0 610.0,335.0 629.0,312.0 650.0,298.0 670.0,288.0 684.0,276.0" fill="none" stroke="#5fa3c6" stroke-width="0.8" stroke-opacity="0.8"/>
<polyline points="626.0,372.0 632.0,390.0 641.0,408.0" fill="none" stroke="#5fa3c6" stroke-width="0.8" stroke-opacity="0.8"/>
<polyline points="662.0,330.0 672.0,333.0 684.0,336.0" fill="none" stroke="#5fa3c6" stroke-width="0.8" stroke-opacity="0.8"/>
<polyline points="470.0,210.0 490.0,185.0 500.0,160.0 480.0,150.0 450.0,140.0 430.0,128.0" fill="none" stroke="#5fa3c6" stroke-width="0.8" stroke-opacity="0.8"/>
<polyline points="190.0,330.0 176.8,365.8" fill="none" stroke="#5fa3c6" stroke-width="0.8" stroke-opacity="0.8"/>
<polyline points="211.8,278.7 205.0,300.0 198.0,320.0 190.0,330.0" fill="none" stroke="#5fa3c6" stroke-width="0.8" stroke-opacity="0.8"/>
<polyline points="300.0,300.0 290.0,270.0 280.0,240.0 270.0,215.0" fill="none" stroke="#5fa3c6" stroke-width="0.8" stroke-opacity="0.8"/>
</g>
<polygon points="184.2,155.8 193.3,156.7 204.2,155.0 214.2,157.5 211.7,165.0 221.7,170.0 233.3,168.3 240.0,160.0 245.8,157.5 256.7,156.7 256.7,150.0 260.0,145.0 284.0,141.8 302.0,137.9 317.6,143.0 338.3,137.9 353.9,131.4 364.2,132.7 370.0,136.7 382.7,139.9 393.3,134.6 401.8,128.2 409.2,130.3 412.5,122.9 393.3,125.0 385.9,116.5 383.8,113.4 391.2,103.9 395.4,97.5 406.0,94.4 407.0,90.1 414.4,93.3 416.6,98.6 419.8,92.2 425.0,98.6 431.4,101.8 430.4,112.3 422.9,114.4 428.0,116.0 435.6,109.1 439.9,104.9 448.4,111.2 451.5,119.7 456.0,121.0 465.6,118.1 477.0,117.4 485.4,118.1 498.1,119.5 510.8,126.6 520.7,136.5 529.2,144.9 536.2,149.2 544.7,152.0 551.8,153.4 561.7,154.1 563.9,158.6 562.6,167.6 565.2,175.4 558.7,180.6 553.5,190.9 548.3,198.7 544.5,209.0 541.9,219.4 543.2,229.7 545.8,240.0 543.2,244.1 562.9,242.7 579.9,245.5 596.8,252.6 599.6,266.7 610.9,276.6 625.0,282.2 642.0,280.8 650.5,269.5 658.9,266.7 664.6,254.0 673.0,254.0 684.3,263.9 681.5,280.8 678.7,303.4 673.0,326.0 684.3,328.8 687.2,337.3 681.5,348.6 664.6,345.8 656.1,334.5 647.6,331.6 639.2,337.3 630.7,342.9 627.9,354.2 625.0,365.5 630.7,374.0 641.9,377.8 639.3,395.9 645.7,408.8 631.5,416.6 626.3,414.0 621.2,401.1 618.6,390.7 608.2,385.5 595.3,388.1 579.7,390.7 577.2,401.1 564.2,403.6 551.3,398.5 540.9,382.9 539.6,370.0 537.0,362.0 525.0,358.0 512.0,360.0 509.9,370.0 517.6,395.9 509.9,416.6 502.1,425.6 494.3,437.3 486.6,439.9 489.2,450.2 484.0,455.4 478.8,469.6 476.2,473.5 487.9,483.9 486.6,494.2 481.4,503.3 473.6,504.6 463.3,499.4 465.9,489.0 458.1,478.7 450.4,473.5 445.2,468.3 450.4,456.7 442.6,447.6 436.7,447.6 418.6,442.5 400.5,421.8 392.7,408.8 394.0,377.8 395.3,370.0 384.9,372.6 375.9,380.4 374.6,390.7 361.6,398.5 348.7,406.2 343.5,415.3 352.6,426.9 352.6,437.3 333.2,450.2 330.6,465.8 315.0,473.5 309.9,485.2 294.3,483.9 281.4,478.7 265.9,473.5 252.9,478.7 240.0,489.0 237.0,491.6 224.1,489.0 211.2,498.1 198.2,496.8 185.3,472.2 172.3,460.6 165.9,458.0 167.2,447.6 155.5,437.3 154.2,421.8 162.0,410.1 156.8,401.1 152.9,389.4 138.8,384.1 122.9,384.1 110.6,385.9 98.2,396.5 91.2,392.9 80.6,398.2 75.3,407.1 74.0,412.0 84.0,413.0 85.0,417.0 79.0,424.0 66.2,441.2 45.5,442.5 41.0,438.0 32.5,440.0 35.2,432.1 34.0,423.0 37.8,421.8 58.0,403.0 64.7,398.2 62.9,391.2 50.6,370.0 55.9,359.4 62.9,350.6 58.5,351.6 57.2,346.5 99.9,312.8 102.5,311.5 105.0,307.6 103.8,297.3 107.6,289.5 105.0,274.0 110.2,268.3 123.2,261.0 140.0,252.0 143.9,245.0 154.2,232.6 163.3,225.0 176.7,208.3 178.3,198.3 191.7,186.7 169.2,185.0 175.0,173.3 183.3,161.7" fill="none" stroke="#55684c" stroke-width="0.9"/>
<polygon points="473.4,88.5 475.5,87.8 488.2,95.5 498.1,102.6 500.9,108.2 506.6,113.9 519.3,118.1 526.4,117.4 536.2,120.9 541.9,126.6 547.5,133.6 556.0,135.1 564.5,139.3 571.5,142.1 575.8,147.8 574.4,150.6 567.3,152.0 561.7,154.1 551.8,153.4 544.7,152.0 536.2,149.2 529.2,144.9 520.7,136.5 510.8,126.6 498.1,119.5 491.1,117.4 496.0,116.0 496.7,109.6 495.3,104.0 485.4,98.4 473.4,90.6" fill="#c3dcef" stroke="#5d9ec0" stroke-width="0.6"/>
<polygon points="460.0,104.7 467.0,104.0 477.0,108.2 484.0,113.9 486.0,117.0 483.0,117.0 476.0,111.0 467.0,107.0 460.0,107.5" fill="#c3dcef" stroke="#5d9ec0" stroke-width="0.6"/>
<polygon points="486.0,117.0 479.8,116.5 474.1,114.5 468.5,116.0 462.8,120.0 458.0,122.5 457.0,121.0 462.0,118.0 468.0,113.5 474.0,112.5 480.0,114.5 485.0,115.5" fill="#c3dcef" stroke="#5d9ec0" stroke-width="0.6"/>
<polygon points="185.5,257.5 190.6,259.2 192.5,264.7 180.0,271.6 165.0,282.2 157.0,290.0 142.0,299.6 138.6,304.6 134.0,302.0 146.0,290.0 154.3,280.0 167.2,268.2 180.2,259.5" fill="#c3dcef" stroke="#5d9ec0" stroke-width="0.6"/>
<polygon points="197.6,249.4 205.9,245.9 214.1,237.6 215.3,240.0 210.6,248.2 202.4,251.8 198.2,251.2" fill="#c3dcef" stroke="#5d9ec0" stroke-width="0.6"/>
<polygon points="191.8,277.6 201.2,270.6 203.5,272.4 196.5,278.8 192.4,279.4" fill="#c3dcef" stroke="#5d9ec0" stroke-width="0.6"/>
<polygon points="275.2,315.4 284.0,321.9 291.8,325.8 302.1,327.0 304.7,331.0 291.8,331.0 278.8,324.5" fill="#c3dcef" stroke="#5d9ec0" stroke-width="0.6"/>
<polygon points="312.5,323.2 328.0,312.8 335.8,312.8 322.8,321.9 313.8,325.8" fill="#c3dcef" stroke="#5d9ec0" stroke-width="0.6"/>
<polygon points="168.0,186.0 185.0,184.0 192.0,188.5 178.0,190.5" fill="#c3dcef" stroke="#5d9ec0" stroke-width="0.6"/>
<polygon points="482.0,231.0 498.0,229.0 515.0,231.0 514.0,234.0 498.0,233.0 482.0,234.5" fill="#c3dcef" stroke="#5d9ec0" stroke-width="0.6"/>
<polygon points="77.0,338.0 87.0,330.0 89.0,331.0 79.0,339.5" fill="#c3dcef" stroke="#5d9ec0" stroke-width="0.6"/>
<polygon points="198.0,320.0 200.5,320.0 201.0,330.0 199.8,338.0 198.4,338.0 198.5,328.0" fill="#c3dcef" stroke="#5d9ec0" stroke-width="0.6"/>
<polygon points="421.5,182.0 424.5,182.5 429.0,196.0 434.0,205.5 446.0,210.0 460.0,210.5 460.0,213.5 446.0,214.0 432.0,209.0 426.0,199.0 421.5,188.0" fill="#c3dcef" stroke="#5d9ec0" stroke-width="0.6"/>
<polygon points="394.0,226.0 400.0,228.0 402.0,240.0 398.0,244.0 395.0,238.0" fill="#c3dcef" stroke="#5d9ec0" stroke-width="0.6"/>
<polygon points="436.0,227.0 440.0,228.0 442.0,237.0 439.0,238.0" fill="#c3dcef" stroke="#5d9ec0" stroke-width="0.6"/>
<polygon points="358.5,194.0 361.0,194.0 363.5,207.0 361.0,208.0" fill="#c3dcef" stroke="#5d9ec0" stroke-width="0.6"/>
<polygon points="363.5,214.0 365.5,214.0 367.0,222.0 365.0,222.0" fill="#c3dcef" stroke="#5d9ec0" stroke-width="0.6"/>
<polygon points="346.0,224.0 349.0,224.0 354.0,232.0 352.0,235.0 348.0,232.0" fill="#c3dcef" stroke="#5d9ec0" stroke-width="0.6"/>
<polygon points="372.0,263.0 378.0,248.0 384.0,247.0 384.0,256.0 392.0,253.0 391.0,258.0 400.0,261.0 410.0,263.0 416.0,267.0 417.0,279.0 413.5,280.0 411.0,269.0 402.0,266.0 392.0,264.0 384.0,261.0 378.0,265.0" fill="#c3dcef" stroke="#5d9ec0" stroke-width="0.6"/>
<polygon points="452.1,432.5 453.6,436.2 441.6,443.7 435.6,454.2 431.1,466.2 419.1,478.2 408.5,484.2 407.0,490.2 411.5,499.3 416.1,511.3 417.6,520.0 411.5,520.0 408.5,505.3 402.5,490.2 401.0,481.2 410.0,481.2 425.1,469.2 429.6,454.2 435.6,442.2 444.6,434.7" fill="#c3dcef" stroke="#5d9ec0" stroke-width="0.6"/>
<polygon points="444.6,469.2 458.1,467.7 470.1,463.2 482.2,463.2 491.2,459.6 494.2,461.7 485.2,467.7 473.2,469.2 470.1,475.2 467.1,484.2 462.6,487.2 459.6,481.2 462.6,472.2 449.1,472.2" fill="#c3dcef" stroke="#5d9ec0" stroke-width="0.6"/>
<polygon points="69.1,407.1 75.3,396.5 84.1,384.1 92.9,375.3 107.1,370.0 114.1,364.7 122.9,362.9 133.5,366.5 145.9,368.2 160.0,375.3 170.6,378.8 174.1,384.1 163.5,387.6 152.9,389.4 138.8,384.1 122.9,384.1 110.6,385.9 98.2,396.5 91.2,392.9 80.6,398.2 75.3,407.1 71.8,410.6" fill="#c3dcef" stroke="#5d9ec0" stroke-width="0.6"/>
<circle cx="273.6" cy="140.8" r="11.9" fill="#ef3631" fill-opacity="0.9" stroke="#3a130e" stroke-width="1.1"/>
<circle cx="270.7" cy="153.3" r="9.2" fill="#ef3631" fill-opacity="0.9" stroke="#3a130e" stroke-width="1.1"/>
<circle cx="262.5" cy="172.5" r="4.5" fill="#ef3631" fill-opacity="0.9" stroke="#3a130e" stroke-width="1.1"/>
<circle cx="207.8" cy="187" r="5.5" fill="#ef3631" fill-opacity="0.9" stroke="#3a130e" stroke-width="1.1"/>
<circle cx="274.5" cy="195" r="2.3" fill="#ef3631" fill-opacity="0.9" stroke="#3a130e" stroke-width="1.1"/>
<circle cx="221.7" cy="215" r="3.7" fill="#ef3631" fill-opacity="0.9" stroke="#3a130e" stroke-width="1.1"/>
<circle cx="242.5" cy="223.5" r="3.6" fill="#ef3631" fill-opacity="0.9" stroke="#3a130e" stroke-width="1.1"/>
<circle cx="260.6" cy="221" r="6.1" fill="#ef3631" fill-opacity="0.9" stroke="#3a130e" stroke-width="1.1"/>
<circle cx="293.6" cy="223.3" r="4.8" fill="#ef3631" fill-opacity="0.9" stroke="#3a130e" stroke-width="1.1"/>
<circle cx="324.9" cy="151.1" r="5.7" fill="#ef3631" fill-opacity="0.9" stroke="#3a130e" stroke-width="1.1"/>
<circle cx="360" cy="151.6" r="5.2" fill="#ef3631" fill-opacity="0.9" stroke="#3a130e" stroke-width="1.1"/>
<circle cx="371" cy="161.2" r="7.8" fill="#ef3631" fill-opacity="0.9" stroke="#3a130e" stroke-width="1.1"/>
<circle cx="410.8" cy="110.2" r="6.5" fill="#ef3631" fill-opacity="0.9" stroke="#3a130e" stroke-width="1.1"/>
<circle cx="423.7" cy="132" r="3.6" fill="#ef3631" fill-opacity="0.9" stroke="#3a130e" stroke-width="1.1"/>
<circle cx="399.2" cy="149.5" r="6.7" fill="#ef3631" fill-opacity="0.9" stroke="#3a130e" stroke-width="1.1"/>
<circle cx="436.2" cy="156.8" r="9" fill="#ef3631" fill-opacity="0.9" stroke="#3a130e" stroke-width="1.1"/>
<circle cx="403" cy="179.3" r="20.7" fill="#ef3631" fill-opacity="0.9" stroke="#3a130e" stroke-width="1.1"/>
<circle cx="409.5" cy="170.7" r="12.2" fill="#ef3631" fill-opacity="0.9" stroke="#3a130e" stroke-width="1.1"/>
<circle cx="388.8" cy="179.3" r="7.8" fill="#ef3631" fill-opacity="0.9" stroke="#3a130e" stroke-width="1.1"/>
<circle cx="376.1" cy="182.1" r="4.9" fill="#ef3631" fill-opacity="0.9" stroke="#3a130e" stroke-width="1.1"/>
<circle cx="446.3" cy="188.3" r="8.3" fill="#ef3631" fill-opacity="0.9" stroke="#3a130e" stroke-width="1.1"/>
<circle cx="423.7" cy="198.7" r="7.8" fill="#ef3631" fill-opacity="0.9" stroke="#3a130e" stroke-width="1.1"/>
<circle cx="395.3" cy="203.1" r="4.4" fill="#ef3631" fill-opacity="0.9" stroke="#3a130e" stroke-width="1.1"/>
<circle cx="413.4" cy="209" r="7.2" fill="#ef3631" fill-opacity="0.9" stroke="#3a130e" stroke-width="1.1"/>
<circle cx="405.1" cy="225.9" r="15" fill="#ef3631" fill-opacity="0.9" stroke="#3a130e" stroke-width="1.1"/>
<circle cx="451" cy="222" r="9" fill="#ef3631" fill-opacity="0.9" stroke="#3a130e" stroke-width="1.1"/>
<circle cx="335.2" cy="194.8" r="9.8" fill="#ef3631" fill-opacity="0.9" stroke="#3a130e" stroke-width="1.1"/>
<circle cx="309.9" cy="188.6" r="6.5" fill="#ef3631" fill-opacity="0.9" stroke="#3a130e" stroke-width="1.1"/>
<circle cx="299" cy="168.4" r="6.2" fill="#ef3631" fill-opacity="0.9" stroke="#3a130e" stroke-width="1.1"/>
<circle cx="328.8" cy="238" r="4.1" fill="#ef3631" fill-opacity="0.9" stroke="#3a130e" stroke-width="1.1"/>
<circle cx="368.6" cy="246.6" r="9.8" fill="#ef3631" fill-opacity="0.9" stroke="#3a130e" stroke-width="1.1"/>
<circle cx="356" cy="220.7" r="5.2" fill="#ef3631" fill-opacity="0.9" stroke="#3a130e" stroke-width="1.1"/>
<circle cx="373.5" cy="200.8" r="5.2" fill="#ef3631" fill-opacity="0.9" stroke="#3a130e" stroke-width="1.1"/>
<circle cx="472.5" cy="124.4" r="6.2" fill="#ef3631" fill-opacity="0.9" stroke="#3a130e" stroke-width="1.1"/>
<circle cx="468.6" cy="138.7" r="7" fill="#ef3631" fill-opacity="0.9" stroke="#3a130e" stroke-width="1.1"/>
<circle cx="512.9" cy="146.4" r="5.4" fill="#ef3631" fill-opacity="0.9" stroke="#3a130e" stroke-width="1.1"/>
<circle cx="518.8" cy="163.5" r="10.9" fill="#ef3631" fill-opacity="0.9" stroke="#3a130e" stroke-width="1.1"/>
<circle cx="476.7" cy="163.2" r="7" fill="#ef3631" fill-opacity="0.9" stroke="#3a130e" stroke-width="1.1"/>
<circle cx="523.8" cy="180" r="5.4" fill="#ef3631" fill-opacity="0.9" stroke="#3a130e" stroke-width="1.1"/>
<circle cx="551" cy="181.6" r="6" fill="#ef3631" fill-opacity="0.9" stroke="#3a130e" stroke-width="1.1"/>
<circle cx="527.4" cy="192.7" r="2.8" fill="#ef3631" fill-opacity="0.9" stroke="#3a130e" stroke-width="1.1"/>
<circle cx="494" cy="200.8" r="3.1" fill="#ef3631" fill-opacity="0.9" stroke="#3a130e" stroke-width="1.1"/>
<circle cx="470.2" cy="210.9" r="5.2" fill="#ef3631" fill-opacity="0.9" stroke="#3a130e" stroke-width="1.1"/>
<circle cx="533.3" cy="221.5" r="4.4" fill="#ef3631" fill-opacity="0.9" stroke="#3a130e" stroke-width="1.1"/>
<circle cx="162.8" cy="241.6" r="5.7" fill="#ef3631" fill-opacity="0.9" stroke="#3a130e" stroke-width="1.1"/>
<circle cx="171" cy="256.4" r="7.2" fill="#ef3631" fill-opacity="0.9" stroke="#3a130e" stroke-width="1.1"/>
<circle cx="221.5" cy="235.7" r="6.5" fill="#ef3631" fill-opacity="0.9" stroke="#3a130e" stroke-width="1.1"/>
<circle cx="221.8" cy="252" r="4.1" fill="#ef3631" fill-opacity="0.9" stroke="#3a130e" stroke-width="1.1"/>
<circle cx="123.7" cy="277.1" r="2.3" fill="#ef3631" fill-opacity="0.9" stroke="#3a130e" stroke-width="1.1"/>
<circle cx="131.2" cy="299.9" r="5.2" fill="#ef3631" fill-opacity="0.9" stroke="#3a130e" stroke-width="1.1"/>
<circle cx="164.6" cy="313.3" r="5.2" fill="#ef3631" fill-opacity="0.9" stroke="#3a130e" stroke-width="1.1"/>
<circle cx="207.3" cy="276.1" r="4.7" fill="#ef3631" fill-opacity="0.9" stroke="#3a130e" stroke-width="1.1"/>
<circle cx="199.3" cy="308.2" r="7.5" fill="#ef3631" fill-opacity="0.9" stroke="#3a130e" stroke-width="1.1"/>
<circle cx="223.3" cy="305.6" r="3.6" fill="#ef3631" fill-opacity="0.9" stroke="#3a130e" stroke-width="1.1"/>
<circle cx="242.5" cy="305" r="2" fill="#ef3631" fill-opacity="0.9" stroke="#3a130e" stroke-width="1.1"/>
<circle cx="249.6" cy="268.3" r="12.2" fill="#ef3631" fill-opacity="0.9" stroke="#3a130e" stroke-width="1.1"/>
<circle cx="115.7" cy="330.7" r="4.7" fill="#ef3631" fill-opacity="0.9" stroke="#3a130e" stroke-width="1.1"/>
<circle cx="78.9" cy="337.4" r="2" fill="#ef3631" fill-opacity="0.9" stroke="#3a130e" stroke-width="1.1"/>
<circle cx="134.1" cy="353.2" r="13.8" fill="#ef3631" fill-opacity="0.9" stroke="#3a130e" stroke-width="1.1"/>
<circle cx="93.5" cy="359.8" r="7.1" fill="#ef3631" fill-opacity="0.9" stroke="#3a130e" stroke-width="1.1"/>
<circle cx="173.4" cy="339.5" r="3.9" fill="#ef3631" fill-opacity="0.9" stroke="#3a130e" stroke-width="1.1"/>
<circle cx="202.6" cy="343.9" r="4.9" fill="#ef3631" fill-opacity="0.9" stroke="#3a130e" stroke-width="1.1"/>
<circle cx="164.8" cy="367.7" r="7.1" fill="#ef3631" fill-opacity="0.9" stroke="#3a130e" stroke-width="1.1"/>
<circle cx="236.5" cy="369.8" r="2.8" fill="#ef3631" fill-opacity="0.9" stroke="#3a130e" stroke-width="1.1"/>
<circle cx="65.6" cy="377.9" r="7.9" fill="#ef3631" fill-opacity="0.9" stroke="#3a130e" stroke-width="1.1"/>
<circle cx="279.3" cy="247.9" r="4.7" fill="#ef3631" fill-opacity="0.9" stroke="#3a130e" stroke-width="1.1"/>
<circle cx="426.3" cy="258.5" r="5.7" fill="#ef3631" fill-opacity="0.9" stroke="#3a130e" stroke-width="1.1"/>
<circle cx="443.7" cy="241.1" r="3.1" fill="#ef3631" fill-opacity="0.9" stroke="#3a130e" stroke-width="1.1"/>
<circle cx="301.3" cy="279.4" r="2.3" fill="#ef3631" fill-opacity="0.9" stroke="#3a130e" stroke-width="1.1"/>
<circle cx="329.8" cy="277.9" r="2" fill="#ef3631" fill-opacity="0.9" stroke="#3a130e" stroke-width="1.1"/>
<circle cx="270.8" cy="289.5" r="3.9" fill="#ef3631" fill-opacity="0.9" stroke="#3a130e" stroke-width="1.1"/>
<circle cx="358.5" cy="290" r="4.9" fill="#ef3631" fill-opacity="0.9" stroke="#3a130e" stroke-width="1.1"/>
<circle cx="387" cy="281.8" r="5.7" fill="#ef3631" fill-opacity="0.9" stroke="#3a130e" stroke-width="1.1"/>
<circle cx="419.3" cy="307.1" r="3.1" fill="#ef3631" fill-opacity="0.9" stroke="#3a130e" stroke-width="1.1"/>
<circle cx="272.6" cy="325.5" r="6.2" fill="#ef3631" fill-opacity="0.9" stroke="#3a130e" stroke-width="1.1"/>
<circle cx="342" cy="332.5" r="4.1" fill="#ef3631" fill-opacity="0.9" stroke="#3a130e" stroke-width="1.1"/>
<circle cx="281.7" cy="361.5" r="2.3" fill="#ef3631" fill-opacity="0.9" stroke="#3a130e" stroke-width="1.1"/>
<circle cx="452.2" cy="372.9" r="3.4" fill="#ef3631" fill-opacity="0.9" stroke="#3a130e" stroke-width="1.1"/>
<circle cx="474" cy="244.1" r="3.7" fill="#ef3631" fill-opacity="0.9" stroke="#3a130e" stroke-width="1.1"/>
<circle cx="516.9" cy="250.3" r="4" fill="#ef3631" fill-opacity="0.9" stroke="#3a130e" stroke-width="1.1"/>
<circle cx="544.6" cy="275.7" r="5.9" fill="#ef3631" fill-opacity="0.9" stroke="#3a130e" stroke-width="1.1"/>
<circle cx="587.8" cy="271.5" r="2.5" fill="#ef3631" fill-opacity="0.9" stroke="#3a130e" stroke-width="1.1"/>
<circle cx="483" cy="273.2" r="2" fill="#ef3631" fill-opacity="0.9" stroke="#3a130e" stroke-width="1.1"/>
<circle cx="594" cy="305.7" r="2.5" fill="#ef3631" fill-opacity="0.9" stroke="#3a130e" stroke-width="1.1"/>
<circle cx="653.3" cy="305.4" r="2.5" fill="#ef3631" fill-opacity="0.9" stroke="#3a130e" stroke-width="1.1"/>
<circle cx="481.9" cy="319.8" r="3.4" fill="#ef3631" fill-opacity="0.9" stroke="#3a130e" stroke-width="1.1"/>
<circle cx="530.7" cy="343.5" r="2.8" fill="#ef3631" fill-opacity="0.9" stroke="#3a130e" stroke-width="1.1"/>
<circle cx="565.8" cy="336.2" r="2.8" fill="#ef3631" fill-opacity="0.9" stroke="#3a130e" stroke-width="1.1"/>
<circle cx="600.5" cy="371.2" r="4.3" fill="#ef3631" fill-opacity="0.9" stroke="#3a130e" stroke-width="1.1"/>
<circle cx="57.6" cy="423" r="20" fill="#ef3631" fill-opacity="0.9" stroke="#3a130e" stroke-width="1.1"/>
<circle cx="192.5" cy="401.6" r="4.4" fill="#ef3631" fill-opacity="0.9" stroke="#3a130e" stroke-width="1.1"/>
<circle cx="169.5" cy="420.2" r="5.2" fill="#ef3631" fill-opacity="0.9" stroke="#3a130e" stroke-width="1.1"/>
<circle cx="241.2" cy="434.2" r="6.2" fill="#ef3631" fill-opacity="0.9" stroke="#3a130e" stroke-width="1.1"/>
<circle cx="209.3" cy="462.6" r="6.2" fill="#ef3631" fill-opacity="0.9" stroke="#3a130e" stroke-width="1.1"/>
<circle cx="266.7" cy="425.1" r="4.7" fill="#ef3631" fill-opacity="0.9" stroke="#3a130e" stroke-width="1.1"/>
<circle cx="280.9" cy="406.7" r="2.6" fill="#ef3631" fill-opacity="0.9" stroke="#3a130e" stroke-width="1.1"/>
<circle cx="306" cy="434.2" r="4.1" fill="#ef3631" fill-opacity="0.9" stroke="#3a130e" stroke-width="1.1"/>
<circle cx="333.4" cy="408" r="3.6" fill="#ef3631" fill-opacity="0.9" stroke="#3a130e" stroke-width="1.1"/>
<circle cx="427.9" cy="407.5" r="5.7" fill="#ef3631" fill-opacity="0.9" stroke="#3a130e" stroke-width="1.1"/>
<circle cx="467.2" cy="456.2" r="12.9" fill="#ef3631" fill-opacity="0.9" stroke="#3a130e" stroke-width="1.1"/>
<circle cx="475.5" cy="489.8" r="8" fill="#ef3631" fill-opacity="0.9" stroke="#3a130e" stroke-width="1.1"/>
<circle cx="479.3" cy="428.7" r="4.9" fill="#ef3631" fill-opacity="0.9" stroke="#3a130e" stroke-width="1.1"/>
<circle cx="500" cy="393.8" r="2.6" fill="#ef3631" fill-opacity="0.9" stroke="#3a130e" stroke-width="1.1"/>
<circle cx="206" cy="373.4" r="1.8" fill="#ef3631" fill-opacity="0.9" stroke="#3a130e" stroke-width="1.1"/>
<circle cx="359.3" cy="371.8" r="1.3" fill="#222"/>
<circle cx="568.6" cy="295.5" r="1.4" fill="#222"/><g font-family="Liberation Sans, sans-serif" fill="#1c1c1c">
<text x="15.5" y="14.1" font-size="10.2" font-weight="bold" textLength="343.5" lengthAdjust="spacingAndGlyphs" fill="#1e1e1e" stroke="#1e1e1e" stroke-width="0.12">Entstandene Arbeitsplätze in neu gegründeten Unternehmen, 2001-2011</text>
<text x="706" y="42.7" font-size="7.4" font-weight="bold" textLength="74" lengthAdjust="spacingAndGlyphs" fill="#1c1c1c" stroke="#1c1c1c" stroke-width="0.12">Wachstumsrate*, in %</text>
<rect x="706.5" y="49.8" width="11" height="7.8" fill="#3e8e38" stroke="#4a4a40" stroke-width="1"/>
<text x="733.6" y="55.599999999999994" font-size="6.6" fill="#1c1c1c" stroke="#1c1c1c" stroke-width="0.12">≥</text>
<text x="742.2" y="55.599999999999994" font-size="6.6" textLength="8.3" lengthAdjust="spacingAndGlyphs" fill="#1c1c1c" stroke="#1c1c1c" stroke-width="0.12">7,0</text>
<rect x="706.5" y="60.4" width="11" height="7.8" fill="#62a655" stroke="#4a4a40" stroke-width="1"/>
<text x="720.8" y="66.2" font-size="6.6" textLength="8.5" lengthAdjust="spacingAndGlyphs" fill="#1c1c1c" stroke="#1c1c1c" stroke-width="0.12">5,5</text>
<text x="733.6" y="66.2" font-size="6.6" fill="#1c1c1c" stroke="#1c1c1c" stroke-width="0.12">–</text>
<text x="742.2" y="66.2" font-size="6.6" textLength="8.3" lengthAdjust="spacingAndGlyphs" fill="#1c1c1c" stroke="#1c1c1c" stroke-width="0.12">6,9</text>
<rect x="706.5" y="71.0" width="11" height="7.8" fill="#9cc783" stroke="#4a4a40" stroke-width="1"/>
<text x="720.8" y="76.8" font-size="6.6" textLength="8.5" lengthAdjust="spacingAndGlyphs" fill="#1c1c1c" stroke="#1c1c1c" stroke-width="0.12">4,0</text>
<text x="733.6" y="76.8" font-size="6.6" fill="#1c1c1c" stroke="#1c1c1c" stroke-width="0.12">–</text>
<text x="742.2" y="76.8" font-size="6.6" textLength="8.3" lengthAdjust="spacingAndGlyphs" fill="#1c1c1c" stroke="#1c1c1c" stroke-width="0.12">5,4</text>
<rect x="706.5" y="81.7" width="11" height="7.8" fill="#d6e7ae" stroke="#4a4a40" stroke-width="1"/>
<text x="720.8" y="87.5" font-size="6.6" textLength="8.5" lengthAdjust="spacingAndGlyphs" fill="#1c1c1c" stroke="#1c1c1c" stroke-width="0.12">2,5</text>
<text x="733.6" y="87.5" font-size="6.6" fill="#1c1c1c" stroke="#1c1c1c" stroke-width="0.12">–</text>
<text x="742.2" y="87.5" font-size="6.6" textLength="8.3" lengthAdjust="spacingAndGlyphs" fill="#1c1c1c" stroke="#1c1c1c" stroke-width="0.12">3,9</text>
<rect x="706.5" y="92.3" width="11" height="7.8" fill="#f6f5cf" stroke="#4a4a40" stroke-width="1"/>
<text x="733.6" y="98.1" font-size="6.6" fill="#1c1c1c" stroke="#1c1c1c" stroke-width="0.12"><</text>
<text x="742.2" y="98.1" font-size="6.6" textLength="8.3" lengthAdjust="spacingAndGlyphs" fill="#1c1c1c" stroke="#1c1c1c" stroke-width="0.12">2,5</text>
<text x="706" y="113.8" font-size="6.3" textLength="35.5" lengthAdjust="spacingAndGlyphs" fill="#1c1c1c" stroke="#1c1c1c" stroke-width="0.12"><tspan font-weight="bold">Schweiz:</tspan> 6,1</text>
<text x="706" y="123.6" font-size="6.4" textLength="132.5" lengthAdjust="spacingAndGlyphs" fill="#1c1c1c" stroke="#1c1c1c" stroke-width="0.12">* in Bezug auf den Bestand aller Beschäftigten</text>
<text x="706" y="131.35" font-size="6.4" textLength="103" lengthAdjust="spacingAndGlyphs" fill="#1c1c1c" stroke="#1c1c1c" stroke-width="0.12">(Vollzeitäquivalente) - Mittelwert der</text>
<text x="706" y="139.1" font-size="6.4" textLength="126.3" lengthAdjust="spacingAndGlyphs" fill="#1c1c1c" stroke="#1c1c1c" stroke-width="0.12">Betriebszählungen 2001, 2005 und 2008 und</text>
<text x="706" y="146.85" font-size="6.4" textLength="69" lengthAdjust="spacingAndGlyphs" fill="#1c1c1c" stroke="#1c1c1c" stroke-width="0.12">einer Schätzung für 2011</text>
<text x="706" y="164.4" font-size="7.1" font-weight="bold" textLength="119.6" lengthAdjust="spacingAndGlyphs" fill="#1c1c1c" stroke="#1c1c1c" stroke-width="0.12">Im Zeitraum 2001-2011 entstandene</text>
<text x="706" y="171.70000000000002" font-size="7.1" font-weight="bold" textLength="119.6" lengthAdjust="spacingAndGlyphs" fill="#1c1c1c" stroke="#1c1c1c" stroke-width="0.12">Arbeitsplätze** in neu gegründeten</text>
<text x="706" y="179.0" font-size="7.1" font-weight="bold" textLength="116.6" lengthAdjust="spacingAndGlyphs" fill="#1c1c1c" stroke="#1c1c1c" stroke-width="0.12">Unternehmen (Vollzeitäquivalente)</text>
<circle cx="726.7" cy="208" r="20.8" fill="#f24a4a" stroke="#c94040" stroke-width="0.8"/>
<circle cx="726.7" cy="218" r="10.8" fill="none" stroke="#d44444" stroke-width="0.6"/>
<circle cx="726.7" cy="222.3" r="6.5" fill="none" stroke="#d44444" stroke-width="0.6"/>
<line x1="726.3" y1="187.2" x2="756" y2="187.2" stroke="#333" stroke-width="0.7"/>
<line x1="726.3" y1="207.3" x2="758.6" y2="207.3" stroke="#333" stroke-width="0.7"/>
<line x1="726.3" y1="219.3" x2="758.6" y2="219.3" stroke="#333" stroke-width="0.7"/>
<text x="759.2" y="189.2" font-size="6.3" textLength="18" lengthAdjust="spacingAndGlyphs" fill="#1c1c1c" stroke="#1c1c1c" stroke-width="0.12">18 997</text>
<text x="761.6" y="209.5" font-size="6.3" textLength="15.7" lengthAdjust="spacingAndGlyphs" fill="#1c1c1c" stroke="#1c1c1c" stroke-width="0.12">5 000</text>
<text x="761.9" y="221.5" font-size="6.3" textLength="15.4" lengthAdjust="spacingAndGlyphs" fill="#1c1c1c" stroke="#1c1c1c" stroke-width="0.12">1 000</text>
<text x="706" y="245.3" font-size="6.3" textLength="48.8" lengthAdjust="spacingAndGlyphs" fill="#1c1c1c" stroke="#1c1c1c" stroke-width="0.12"><tspan font-weight="bold">Schweiz:</tspan> 203 533</text>
<text x="706" y="255.1" font-size="6.3" textLength="57" lengthAdjust="spacingAndGlyphs" fill="#1c1c1c" stroke="#1c1c1c" stroke-width="0.12">** Sektoren 2 und 3</text>
<path d="M706.3 535.3 V539.1 H831.2 V535.3 M737.4 535.3 V539.1 M768.1 535.3 V539.1 M799.2 535.3 V539.1" fill="none" stroke="#333" stroke-width="0.9"/>
<text x="704.7" y="533.4" font-size="6.3" textLength="2.8" lengthAdjust="spacingAndGlyphs" fill="#1c1c1c" stroke="#1c1c1c" stroke-width="0.12">0</text>
<text x="763.4" y="533.4" font-size="6.3" textLength="10.4" lengthAdjust="spacingAndGlyphs" fill="#1c1c1c" stroke="#1c1c1c" stroke-width="0.12">27,5</text>
<text x="827.4" y="533.4" font-size="6.3" textLength="17.9" lengthAdjust="spacingAndGlyphs" fill="#1c1c1c" stroke="#1c1c1c" stroke-width="0.12">55 km</text>
<text x="706" y="548.1" font-size="6.6" font-weight="bold" textLength="49" lengthAdjust="spacingAndGlyphs" fill="#1c1c1c" stroke="#1c1c1c" stroke-width="0.12">Raumgliederung:</text>
<text x="706" y="555.8" font-size="6.6" textLength="39.2" lengthAdjust="spacingAndGlyphs" fill="#1c1c1c" stroke="#1c1c1c" stroke-width="0.12">MS-Regionen</text>
<text x="20.9" y="578.7" font-size="5.2" textLength="74.8" lengthAdjust="spacingAndGlyphs" fill="#4a4a4a" stroke="#4a4a4a" stroke-width="0.12">Schweizerische Eidgenossenschaft</text>
<text x="20.9" y="584.8" font-size="5.2" textLength="45.5" lengthAdjust="spacingAndGlyphs" fill="#4a4a4a" stroke="#4a4a4a" stroke-width="0.12">Confédération suisse</text>
<text x="20.9" y="590.8" font-size="5.2" textLength="53.6" lengthAdjust="spacingAndGlyphs" fill="#4a4a4a" stroke="#4a4a4a" stroke-width="0.12">Confederazione Svizzera</text>
<text x="20.9" y="596.8" font-size="5.2" textLength="45.5" lengthAdjust="spacingAndGlyphs" fill="#4a4a4a" stroke="#4a4a4a" stroke-width="0.12">Confederaziun svizra</text>
<text x="107.8" y="578.4" font-size="5.2" textLength="98.1" lengthAdjust="spacingAndGlyphs" fill="#4a4a4a" stroke="#4a4a4a" stroke-width="0.12">Eidgenössisches Departement des Innern EDI</text>
<text x="107.8" y="584.3" font-size="5.2" textLength="84" lengthAdjust="spacingAndGlyphs" fill="#4a4a4a" stroke="#4a4a4a" stroke-width="0.12">Département fédéral de l'intérieur DFI</text>
<text x="107.8" y="590.4" font-size="5.2" font-weight="bold" textLength="58.6" lengthAdjust="spacingAndGlyphs" fill="#222" stroke="#222" stroke-width="0.12">Bundesamt für Statistik BFS</text>
<text x="107.8" y="596.3" font-size="5.2" font-weight="bold" textLength="74.1" lengthAdjust="spacingAndGlyphs" fill="#222" stroke="#222" stroke-width="0.12">Office fédéral de la statistique OFS</text>
<text x="847.7" y="578.6" font-size="5.0" textLength="37.2" lengthAdjust="spacingAndGlyphs" text-anchor="end" fill="#4a4a4a" stroke="#4a4a4a" stroke-width="0.12">Karten-ID: 16466</text>
<text x="847.7" y="584.8" font-size="5.0" textLength="66.4" lengthAdjust="spacingAndGlyphs" text-anchor="end" fill="#4a4a4a" stroke="#4a4a4a" stroke-width="0.12">Statistischer Atlas der Schweiz</text>
<text x="847.2" y="590.4" font-size="5.0" textLength="314.3" lengthAdjust="spacingAndGlyphs" text-anchor="end" fill="#4a4a4a" stroke="#4a4a4a" stroke-width="0.12">Quelle(n): BFS – Betriebszählung (BZ), Statistik der Unternehmensdemografie (UDEMO); BFS – Statistik der Unternehmensdemografie (UDEMO)</text>
<text x="847.7" y="596.1" font-size="5.0" font-weight="bold" textLength="128.5" lengthAdjust="spacingAndGlyphs" text-anchor="end" fill="#222" stroke="#222" stroke-width="0.12">© Bundesamt für Statistik, ThemaKart, Neuchâtel 2009-2014</text>
<path d="M3.6 574.3 H16.2 V581 Q16.2 586.5 9.9 588.4 Q3.6 586.5 3.6 581 Z" fill="#d8232a" stroke="#e88" stroke-width="0.4"/>
<path d="M8.7 576.6 H11.1 V579.4 H13.9 V581.8 H11.1 V584.6 H8.7 V581.8 H5.9 V579.4 H8.7 Z" fill="#fff"/>
<rect x="839.1" y="3.6" width="7.6" height="13.8" rx="3.6" fill="#48684a" stroke="#2f4a30" stroke-width="1.3"/>
<rect x="841.6" y="4.8" width="2.6" height="7.6" rx="1.2" fill="#cfe6c8"/>
<path d="M840.9 13.6 Q843 17 845.1 13.6 Q843 14.8 840.9 13.6 Z" fill="#dff0d8" stroke="#dff0d8" stroke-width="0.6"/>
<rect x="848" y="3" width="2" height="4.8" fill="#e8e23c"/>
</g>
</svg>

</body></html>
